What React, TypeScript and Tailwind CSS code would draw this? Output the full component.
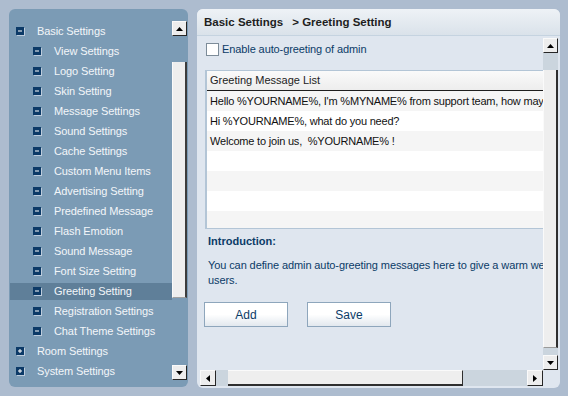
import React from 'react'

const children = [
    'View Settings',
    'Logo Setting',
    'Skin Setting',
    'Message Settings',
    'Sound Settings',
    'Cache Settings',
    'Custom Menu Items',
    'Advertising Setting',
    'Predefined Message',
    'Flash Emotion',
    'Sound Message',
    'Font Size Setting',
    'Greeting Setting',
    'Registration Settings',
    'Chat Theme Settings',
]

const messages = [
    "Hello %YOURNAME%, I'm %MYNAME% from support team, how may I help you?",
    'Hi %YOURNAME%, what do you need?',
    'Welcome to join us,  %YOURNAME% !',
    '',
    '',
    '',
    '',
]

function TreeIcon({ open }: { open: boolean }) {
    return (
        <svg width="9" height="9" viewBox="0 0 9 9" className="shrink-0">
            <rect x="1" y="1" width="8" height="8" fill="#bccbdb" />
            <rect x="0" y="0" width="8" height="8" fill="#0c3a67" />
            <rect x="2" y="3.5" width="4" height="1" fill="#ffffff" />
            {!open && <rect x="3.5" y="2" width="1" height="4" fill="#ffffff" />}
        </svg>
    )
}

function Arrow({ dir }: { dir: 'up' | 'down' | 'left' | 'right' }) {
    const pts = {
        up: '0,4 7,4 3.5,0',
        down: '0,0 7,0 3.5,4',
        left: '4,0 4,7 0,3.5',
        right: '0,0 0,7 4,3.5',
    }[dir]
    const w = dir === 'up' || dir === 'down' ? 7 : 4
    const h = dir === 'up' || dir === 'down' ? 4 : 7
    return (
        <svg width={w} height={h} viewBox={`0 0 ${w} ${h}`}>
            <polygon points={pts} fill="#000000" />
        </svg>
    )
}

function ScrollButton({ dir, w = 15, h = 15 }: { dir: 'up' | 'down' | 'left' | 'right'; w?: number; h?: number }) {
    return (
        <div
            className="shrink-0 flex items-center justify-center bg-[#ededed] border border-t-[#fafafa] border-l-[#fafafa] border-r-[#262626] border-b-[#262626]"
            style={{ width: w, height: h }}
        >
            <Arrow dir={dir} />
        </div>
    )
}

function TreeRow({ label, level, open, active }: { label: string; level: number; open: boolean; active?: boolean }) {
    return (
        <div className="h-[20px] pt-[2px] pb-[1px]">
            <div
                className={`h-full flex items-center ${active ? 'bg-[#5f7f99]' : ''} ${
                    level === 0 ? 'pl-[6px]' : 'pl-[23px]'
                }`}
            >
                <TreeIcon open={open} />
                <span className="ml-[12px] text-[11px] leading-[13px] tracking-[-0.1px] text-[#f3f6f9] whitespace-nowrap">
                    {label}
                </span>
            </div>
        </div>
    )
}

export default function App() {
    return (
        <div className="w-[568px] h-[396px] bg-[#adbccf] overflow-hidden flex pt-[9px] pl-[9px] font-['Liberation_Sans',Arial,sans-serif]">
            {/* sidebar */}
            <div className="w-[179px] h-[378px] rounded-[6px] bg-[#7b9bb5] flex pt-[12px] pb-[7px] pr-[1px] pl-[1px]">
                <div className="flex-1 overflow-hidden">
                    <TreeRow label="Basic Settings" level={0} open />
                    {children.map((c) => (
                        <TreeRow key={c} label={c} level={1} open active={c === 'Greeting Setting'} />
                    ))}
                    <TreeRow label="Room Settings" level={0} open={false} />
                    <TreeRow label="System Settings" level={0} open={false} />
                </div>
                <div className="w-[15px] flex flex-col">
                    <ScrollButton dir="up" />
                    <div className="h-[26px]" />
                    <div className="h-[236px] bg-[#eeeeee] border-l border-l-[#fafafa] border-r-2 border-r-[#3c3c3c] border-b border-b-[#a0a0a0]" />
                    <div className="flex-1" />
                    <ScrollButton dir="down" />
                </div>
            </div>

            {/* main panel */}
            <div className="ml-[9px] w-[363px] h-[379px] rounded-[6px] bg-[#dfe6ef] flex flex-col pl-[3px] pr-[2px] pb-[2px] overflow-hidden">
                <div className="h-[27px] -ml-[3px] -mr-[2px] pl-[7px] flex items-center bg-linear-to-b from-[#eef2f6] to-[#dae2ea] border-b border-b-[#c5d3e0] text-[11.5px] leading-[14px] font-bold text-[#1e1e1e] whitespace-nowrap">
                    <span>Basic Settings</span>
                    <span className="ml-[9px]">&gt; Greeting Setting</span>
                </div>

                <div className="flex h-[334px]">
                    <div className="w-[343px] overflow-hidden flex flex-col">
                        <div className="mt-[7px] ml-[6px] h-[13px] flex items-center">
                            <div className="w-[13px] h-[13px] bg-white border border-[#7d8c99]" />
                            <span className="ml-[3px] text-[11px] leading-[13px] tracking-[-0.1px] text-[#0b3b67]">
                                Enable auto-greeting of admin
                            </span>
                        </div>

                        <div className="mt-[14px] ml-[5px] w-[460px] shrink-0 border-t border-b border-l-2 border-[#b3c5d6] bg-white">
                            <div className="h-[20px] flex items-center pl-[3px] bg-linear-to-b from-[#fafafa] to-[#ededed] border-b border-b-[#1e1e1e] text-[11px] leading-[13px] text-[#222222]">
                                Greeting Message List
                            </div>
                            <div className="h-[137px] overflow-hidden">
                                {messages.map((m, i) => (
                                    <div
                                        key={i}
                                        className={`h-[20px] flex items-center pl-[3px] text-[11px] leading-[13px] tracking-[-0.2px] text-[#111111] whitespace-pre ${
                                            i % 2 === 0 ? 'bg-[#f5f5f5]' : 'bg-white'
                                        }`}
                                    >
                                        {m}
                                    </div>
                                ))}
                            </div>
                        </div>

                        <div className="mt-[5px] ml-[8px] text-[11px] leading-[14px] font-bold text-[#0b3b67]">Introduction:</div>
                        <div className="mt-[10px] ml-[8px] text-[11px] leading-[15px] tracking-[-0.1px] text-[#0b3b67] whitespace-nowrap">
                            <div>You can define admin auto-greeting messages here to give a warm welcome to</div>
                            <div>users.</div>
                        </div>

                        <div className="mt-[14px] ml-[4px] flex gap-[19px]">
                            <button className="w-[84px] h-[25px] bg-linear-to-b from-white via-white to-[#e2e8ee] border border-[#8ea6bc] text-[12px] leading-[14px] text-[#0b3b67]">
                                Add
                            </button>
                            <button className="w-[84px] h-[25px] bg-linear-to-b from-white via-white to-[#e2e8ee] border border-[#8ea6bc] text-[12px] leading-[14px] text-[#0b3b67]">
                                Save
                            </button>
                        </div>
                    </div>

                    <div className="w-[15px] mt-[2px] flex flex-col">
                        <ScrollButton dir="up" />
                        <div className="h-[17px] bg-[#cbd5de]" />
                        <div className="h-[278px] bg-[#eeeeee] border-l border-l-[#fafafa] border-r-2 border-r-[#2e2e2e] border-b border-b-[#9a9a9a]" />
                        <div className="h-[7px] bg-[#cbd5de]" />
                        <ScrollButton dir="down" />
                    </div>
                </div>

                <div className="flex h-[16px]">
                    <ScrollButton dir="left" w={16} h={16} />
                    <div className="w-[12px] bg-[#cbd5de]" />
                    <div className="w-[235px] bg-[#eeeeee] border-t border-t-[#fafafa] border-r border-r-[#2e2e2e] border-b-2 border-b-[#2e2e2e]" />
                    <div className="w-[64px] bg-[#cbd5de]" />
                    <ScrollButton dir="right" w={16} h={16} />
                </div>
            </div>
        </div>
    )
}
